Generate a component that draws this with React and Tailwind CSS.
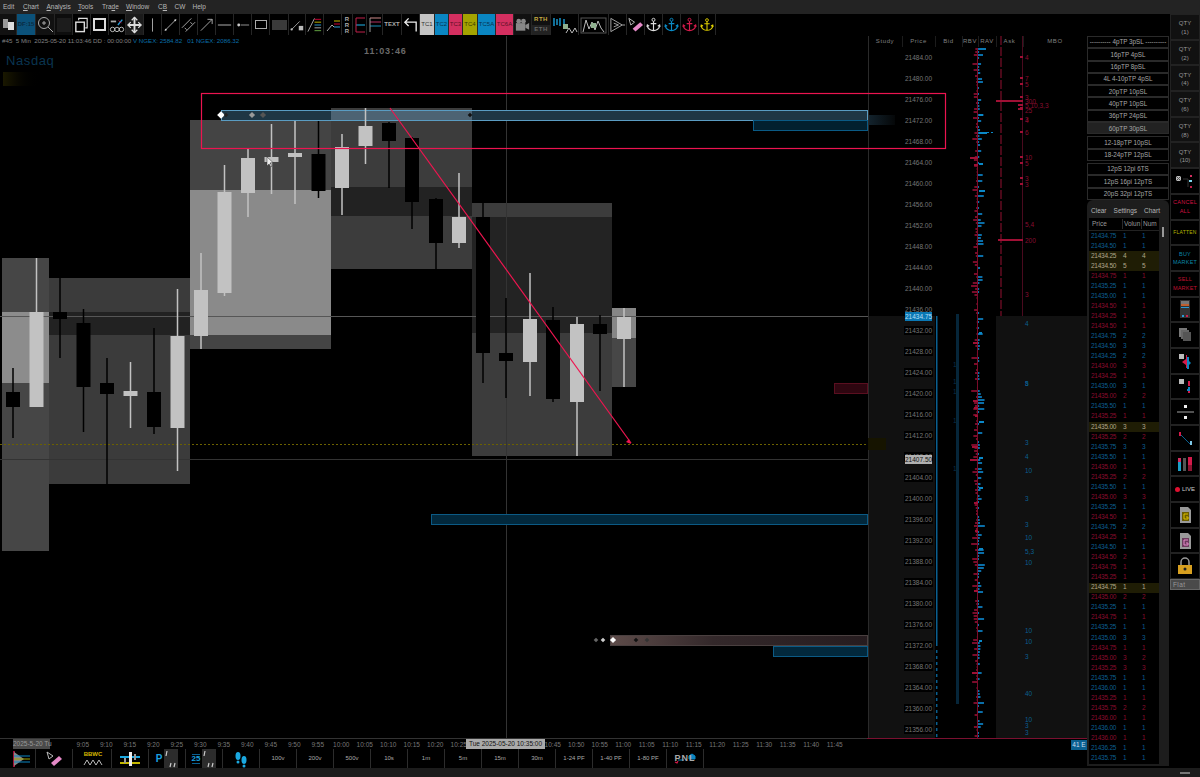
import React from "react";

const FONT = "font-['Liberation_Sans',Arial,sans-serif]";

const candles = [
  [13, 368, 438, 392, 407, 0], [36.5, 258, 407, 312, 407, 1], [60, 278, 358, 312, 319, 0],
  [83.5, 309, 432, 323, 387, 0], [107, 358, 484, 383, 394, 0], [130.5, 362, 428, 391, 396, 1],
  [154, 328, 434, 392, 427, 0], [177.5, 289, 471, 336, 428, 1], [201, 253, 349, 290, 336, 1],
  [224.5, 165, 296, 192, 293, 1], [248, 149, 217, 158, 193, 1], [271.5, 124, 194, 157, 162, 1],
  [295, 121, 204, 153, 157, 1], [318.5, 121, 198, 154, 191, 0], [342, 134, 215, 147, 188, 1],
  [365.5, 108, 164, 126, 146, 1], [389, 122, 188, 123, 141, 0], [412, 137, 229, 138, 202, 0],
  [436, 198, 269, 199, 243, 0], [459, 173, 248, 217, 243, 1], [483, 203, 383, 217, 353, 0],
  [506, 298, 398, 353, 361, 0], [530, 273, 396, 319, 362, 1], [553, 307, 402, 320, 399, 0],
  [577, 317, 456, 324, 402, 1], [600, 315, 391, 324, 334, 0], [624, 308, 387, 317, 339, 1],
];

// [x, w, top, bottom, color, inner top, inner bottom, inner color]
const boxes = [
  [2, 47, 258, 551, "#464646", 312, 383, "#8c8c8c"],
  [49, 141, 278, 484, "#3b3b3b", 312, 335, "#222222"],
  [190, 141, 120, 349, "#444444", 190, 335, "#8a8a8a"],
  [331, 141, 108, 269, "#3c3c3c", 187, 216, "#222222"],
  [472, 140, 203, 456, "#3c3c3c", 217, 333, "#232323"],
  [612, 24, 308, 387, "#474747", 308, 338, "#868686"],
];

const prices = ["21484.00","21480.00","21476.00","21472.00","21468.00","21464.00","21460.00","21456.00","21452.00","21448.00","21444.00","21440.00","21436.00","21432.00","21428.00","21424.00","21420.00","21416.00","21412.00","21408.00","21404.00","21400.00","21396.00","21392.00","21388.00","21384.00","21380.00","21376.00","21372.00","21368.00","21364.00","21360.00","21356.00"];

const mboRed = [["4",57],["7",78],["5",84],["3",97],["300",101],["5,10,3,3",105],["25",110],["3",119],["4",120],["6",132],["10",157],["5",163],["3",178],["3",184],["5,4",224],["200",240],["3",294]];
const mboBlue = [["4",323],["8",383],["5",383],["3",442],["4",456],["10",470],["3",498],["3",524],["10",537],["5,3",551],["10",562],["10",630],["10",641],["3",656],["40",693],["10",719],["3",725],["3",732]];

// pseudo random bars for the volume columns, same result every render
let seed = 7;
const rnd = () => {
  seed = (seed * 16807) % 2147483647;
  return (seed % 1000) / 1000;
};
const bars = [];
for (let y = 48; y < 738; y += 3) {
  bars.push({ y, red: Math.pow(rnd(), 3) * 6 + 1, blue: rnd() > 0.45 ? Math.pow(rnd(), 3) * 6 + 1 : 0 });
}
const bigRed = [[157, 8], [164, 4], [342, 5], [446, 6], [459, 8], [400, 5], [407, 4], [415, 3], [502, 4], [530, 3], [590, 4], [672, 6]];
const bigBlue = [[132, 8], [114, 4], [190, 6], [163, 4], [421, 5], [457, 4], [332, 3], [487, 4], [548, 4], [640, 3]];

const orders = [
  ["21434.75",1,1,"b"],["21434.50",1,1,"b"],["21434.25",4,4,"y"],["21434.50",5,5,"y"],["21434.75",1,1,"r"],["21435.25",1,1,"b"],["21435.00",1,1,"b"],["21434.50",1,1,"r"],["21434.25",1,1,"r"],["21434.50",1,1,"r"],
  ["21434.75",2,2,"b"],["21434.50",3,3,"b"],["21434.25",2,2,"b"],["21434.00",3,3,"r"],["21434.25",1,1,"r"],["21435.00",3,1,"b"],["21435.00",2,2,"r"],["21435.50",1,1,"b"],["21435.25",1,1,"r"],["21435.00",3,3,"y"],
  ["21435.25",2,2,"r"],["21435.75",3,3,"b"],["21435.50",1,1,"b"],["21435.00",1,1,"r"],["21435.25",2,2,"r"],["21435.50",1,1,"b"],["21435.00",3,3,"r"],["21435.25",1,1,"b"],["21434.50",1,1,"r"],["21434.75",2,2,"b"],
  ["21434.25",1,1,"r"],["21434.50",1,1,"b"],["21434.50",2,1,"r"],["21434.75",1,1,"r"],["21435.25",1,1,"r"],["21434.75",1,1,"y"],["21435.00",2,2,"r"],["21435.25",1,1,"b"],["21434.75",1,1,"r"],["21435.25",1,1,"b"],
  ["21435.00",3,3,"b"],["21434.75",1,1,"r"],["21435.00",3,2,"r"],["21435.25",3,3,"r"],["21435.75",1,1,"b"],["21436.00",1,1,"b"],["21435.25",1,1,"r"],["21435.75",2,2,"r"],["21436.00",1,1,"r"],["21436.00",1,1,"b"],
  ["21436.00",1,1,"r"],["21436.25",1,1,"b"],["21435.75",1,1,"b"],
];

const times = [];
for (let m = 9 * 60 + 5; m <= 11 * 60 + 45; m += 5) {
  times.push(`${Math.floor(m / 60)}:${String(m % 60).padStart(2, "0")}`);
}
// these three sit under the crosshair date tag
const hiddenTimes = ["10:30", "10:35", "10:40"];

const Ico = ({ w = 18, h = 20, children }) => (
  <svg width={w} height={h} viewBox={`0 0 ${w} ${h}`} fill="none">{children}</svg>
);

const Anchor = ({ color }) => (
  <Ico>
    <circle cx="9" cy="4.5" r="1.6" stroke={color} />
    <path d="M9 6v10M6 8.5h6M2.5 10.5c0 3.5 3.5 5.5 6.5 5.5s6.5-2 6.5-5.5M2 12l.5-2 2 1.2M16 12l-.5-2-2 1.2" stroke={color} strokeWidth="1.2" />
  </Ico>
);

const Eraser = () => (
  <Ico>
    <path d="M2 3l6 4-4 3z" stroke="#bbb" />
    <path d="M6 14l8-7 3 3-8 7z" fill="#e58ac8" />
  </Ico>
);

const Cell = ({ w = 18, className = "", children }) => (
  <div style={{ width: w }} className={`h-full shrink-0 flex items-center justify-center border-r border-[#262626] text-[#aaa] text-[6px] whitespace-nowrap overflow-hidden ${className}`}>
    {children}
  </div>
);

const Toolbar = () => (
  <div className="h-[21px] flex items-stretch bg-black">
    <Cell w={17} className="bg-[#111]"><Ico w={14}><rect x="2" y="4" width="5" height="9" fill="#999" /><rect x="7" y="7" width="6" height="8" fill="#ddd" /></Ico></Cell>
    <Cell w={19} className="bg-[#0b5179] !text-[#0a2c44] font-bold">DF:15</Cell>
    <Cell w={19} className="bg-[#111]"><Ico><circle cx="8" cy="8" r="5.5" stroke="#aaa" /><path d="M12 12l5 5M6 8h4M8 6v4" stroke="#aaa" /></Ico></Cell>
    <Cell w={18} className="bg-[#0d0d0d]"><div className="w-[14px] h-[14px] bg-[#1c1c1c]" /></Cell>
    <Cell className="bg-black"><Ico><rect x="3" y="7" width="9" height="10" stroke="#ddd" strokeWidth="1.5" /><path d="M6 5V3h9v10h-2" stroke="#ddd" strokeWidth="1.2" /></Ico></Cell>
    <Cell className="bg-black"><div className="w-[13px] h-[13px] border-2 border-[#ddd]" /></Cell>
    <Cell w={17}><Ico><circle cx="4" cy="15" r="2.5" stroke="#ccc" /><circle cx="9" cy="15" r="2.5" stroke="#ccc" /><circle cx="14" cy="15" r="2.5" stroke="#ccc" /><path d="M2 6h6" stroke="#aaa" strokeWidth="2" /><path d="M10 10l5-6" stroke="#2a9bd6" strokeWidth="1.5" /><path d="M11 5l3 3" stroke="#d02050" /></Ico></Cell>
    <Cell w={18} className="bg-[#1a1a1a]"><Ico><path d="M9 2v16M2 10h14" stroke="#ddd" strokeWidth="2" /><path d="M6 5l3-3 3 3M6 15l3 3 3-3M5 7l-3 3 3 3M13 7l3 3-3 3" stroke="#ddd" strokeWidth="1.3" /></Ico></Cell>
    <Cell><Ico><path d="M9 3v14" stroke="#aaa" /></Ico></Cell>
    <Cell><Ico><path d="M3 16L15 4" stroke="#aaa" /><circle cx="4" cy="15" r="1" fill="#ccc" /><circle cx="14" cy="5" r="1" fill="#ccc" /></Ico></Cell>
    <Cell><Ico><path d="M2 13L12 3M6 17L16 7M5 13l2 2M11 7l2 2" stroke="#aaa" /></Ico></Cell>
    <Cell><Ico><path d="M3 16L15 4M10 4h5v5" stroke="#aaa" /></Ico></Cell>
    <Cell><Ico><path d="M2 10h14" stroke="#999" strokeWidth="1.2" /></Ico></Cell>
    <Cell><Ico><path d="M7 10h9" stroke="#999" /><circle cx="5" cy="10" r="1.5" fill="#ccc" /></Ico></Cell>
    <Cell w={18}><div className="w-[12px] h-[9px] border border-[#aaa]" /></Cell>
    <Cell w={19}><div className="w-[15px] h-[10px] bg-[#3a3a3a]" /></Cell>
    <Cell w={17}><Ico><path d="M3 15L12 6" stroke="#aaa" /><circle cx="3" cy="15" r="1.3" fill="#bbb" /><rect x="11" y="11" width="5" height="5" fill="#bbb" /></Ico></Cell>
    <Cell w={18}><Ico><path d="M2 17L9 3" stroke="#aaa" /><path d="M9 4h7" stroke="#c03" /><path d="M9 7h7" stroke="#c5b800" /><path d="M9 10h7" stroke="#2a9bd6" /><path d="M9 13h7" stroke="#aaa" /><path d="M9 16h7" stroke="#6a4" /></Ico></Cell>
    <Cell w={18}><Ico w={16}><path d="M2 16l5-6 2 2" stroke="#aaa" /><path d="M9 6h6" stroke="#c5b800" /><path d="M9 9h6" stroke="#c03" /><path d="M9 12h6" stroke="#2a9bd6" /></Ico></Cell>
    <Cell w={11} className="leading-[6px] font-bold flex-col"><span>R</span><span>R</span><span>R</span></Cell>
    <Cell w={14}><Ico w={12}><path d="M2 3h9" stroke="#c0204a" /><path d="M2 10h9" stroke="#1a8fb8" strokeWidth="1.3" /><path d="M2 17h9M2 3v14" stroke="#c0204a" /></Ico></Cell>
    <Cell w={16}><Ico w={14}><path d="M2 3h11" stroke="#c88" /><path d="M2 7h11" stroke="#b03060" /><path d="M2 11h11" stroke="#1a8fb8" /><path d="M2 3v14" stroke="#999" /></Ico></Cell>
    <Cell w={19} className="font-bold">TEXT</Cell>
    <Cell w={18}><Ico><path d="M15 17V7H3M7 3L3 7l4 4" stroke="#eee" strokeWidth="1.4" /></Ico></Cell>
    <Cell w={15} className="bg-[#c4c4c4] !text-[#333]">TC1</Cell>
    <Cell w={14} className="bg-[#0a86c2] !text-[#08344f]">TC2</Cell>
    <Cell w={14} className="bg-[#d42f60] !text-[#5a0f25]">TC3</Cell>
    <Cell w={15} className="bg-[#a3a300] !text-[#3c3c00]">TC4</Cell>
    <Cell w={18} className="bg-[#0a86c2] !text-[#08344f]">TC5A</Cell>
    <Cell w={18} className="bg-[#d42f60] !text-[#5a0f25]">TC6A</Cell>
    <Cell w={18} className="bg-[#111]"><Ico><rect x="2" y="8" width="10" height="8" fill="#888" /><circle cx="5" cy="6" r="2.5" fill="#888" /><circle cx="10" cy="6" r="2.5" fill="#888" /><path d="M12 10l4-2v7l-4-2z" fill="#888" /></Ico></Cell>
    <Cell w={19} className="flex-col bg-[#111]">
      <span className="w-full h-[10px] flex items-center justify-center text-[#c5ab40] tracking-[0.5px] font-bold">RTH</span>
      <span className="w-full h-[10px] flex items-center justify-center bg-[#222] text-[#666] tracking-[0.5px] font-bold">ETH</span>
    </Cell>
    <Cell w={28}><Ico w={27}><path d="M3 3v8M6 4v6M9 3v8M13 4v6" stroke="#1a9fd8" strokeWidth="1.4" /><rect x="12" y="9" width="5" height="5" fill="#8fb08f" /><path d="M15 18l3-5 3 5 3-5 2 4" stroke="#bbb" /></Ico></Cell>
    <Cell w={30}><Ico w={27}><rect x="1" y="3" width="25" height="15" stroke="#555" /><path d="M3 17l3-12 3 9 3-7 3 8 3-9 3 7 3 4" stroke="#bbb" /><rect x="11" y="8" width="5" height="5" fill="#8fb08f" /></Ico></Cell>
    <Cell w={18}><Ico><path d="M2 3l12 7-12 7zM5 8l5 2-5 2M14 10h3" stroke="#aaa" /></Ico></Cell>
    <Cell w={18}><Eraser /></Cell>
    <Cell w={18}><Anchor color="#ddd" /></Cell>
    <Cell w={18}><Anchor color="#0a8cc8" /></Cell>
    <Cell w={18}><Anchor color="#d41a4a" /></Cell>
    <Cell w={17}><Anchor color="#e0d000" /></Cell>
    <div className="flex-1 bg-black" />
  </div>
);

const ChartDrawing = () => (
  <svg className="absolute left-0 top-0" width="1087" height="703" viewBox="0 35 1087 703">
    <defs>
      <linearGradient id="stub"><stop offset="0" stopColor="#13232d" /><stop offset="1" stopColor="#050708" /></linearGradient>
      <linearGradient id="pink"><stop offset="0" stopColor="#5e4c4a" /><stop offset="0.4" stopColor="#33282a" /><stop offset="1" stopColor="#261c1f" /></linearGradient>
    </defs>
    {/* ladder shading */}
    <rect x="868" y="316" width="67" height="422" fill="#111" />
    <rect x="996" y="316" width="91" height="422" fill="#111" />
    {[868, 902, 935, 962, 978, 996, 1023].map((x) => (
      <line key={x} x1={x + 0.5} x2={x + 0.5} y1="36" y2={x === 868 ? 738 : 47} stroke={x === 868 ? "#2a2a2a" : "#1c1c1c"} />
    ))}
    {boxes.map((b, i) => (
      <g key={i}>
        <rect x={b[0]} y={b[2]} width={b[1]} height={b[3] - b[2]} fill={b[4]} />
        <rect x={b[0]} y={b[5]} width={b[1]} height={b[6] - b[5]} fill={b[7]} />
      </g>
    ))}
    {/* levels */}
    <line x1="0" x2="868" y1="316.5" y2="316.5" stroke="#565656" />
    <line x1="0" x2="868" y1="459.5" y2="459.5" stroke="#333" />
    <line x1="0" x2="868" y1="444.5" y2="444.5" stroke="#6b6100" strokeDasharray="2 2" />
    <rect x="868" y="438" width="18" height="12" fill="#161400" />
    <line x1="506.5" x2="506.5" y1="36" y2="738" stroke="#333" />
    {/* zones */}
    <rect x="221.5" y="110.5" width="646" height="10" fill="#1f3644" stroke="#5a9cc2" />
    <rect x="331" y="111" width="141" height="9" fill="#4d6373" />
    <rect x="753.5" y="120.5" width="114" height="10" fill="#02202f" stroke="#0a5a85" />
    <rect x="869" y="115" width="26" height="10" fill="url(#stub)" />
    <rect x="431.5" y="514.5" width="436" height="10" fill="#02283c" stroke="#0b5a85" />
    <rect x="610.5" y="635.5" width="257" height="10" fill="url(#pink)" stroke="#4a4040" />
    <rect x="773.5" y="646.500" width="94" height="10" fill="#02283c" stroke="#0b5a85" />
    <rect x="834.5" y="383.5" width="33" height="10" fill="#2e0610" stroke="#5a0f20" />
    {candles.map((c) => {
      const col = c[5] ? "#c2c2c2" : "#000";
      return (
        <g key={c[0]}>
          <rect x={c[0] - 0.75} y={c[1]} width="1.5" height={c[2] - c[1]} fill={col} />
          <rect x={c[0] - 7} y={c[3]} width="14" height={c[4] - c[3]} fill={col} />
        </g>
      );
    })}
    {/* handles on the zones */}
    {[[221, 5, "#fff"], [226, 3, "#222"], [252, 4, "#999"], [263, 4, "#555"], [470, 3, "#111"], [596, 3, "#666"], [603, 3, "#ccc"], [613, 4, "#fff"], [636, 3, "#111"], [647, 3, "#333"]].map(([x, r, f]) => {
      const y = x > 500 ? 640 : 115;
      return <path key={x} d={`M${x - r / 1.3} ${y}L${x} ${y - r / 1.3}L${x + r / 1.3} ${y}L${x} ${y + r / 1.3}Z`} fill={f} />;
    })}
    {/* red box and arrow */}
    <rect x="201.5" y="93.5" width="744" height="55" stroke="#ec1450" strokeWidth="1.2" fill="none" />
    <path d="M390 108L631 443" stroke="#ee1550" strokeWidth="1.2" />
    <path d="M631 444l-5-2 3-3z" fill="#ee1550" />
    <path d="M267 157v9l2-2 2 3 1-1-2-3 3-.5z" fill="#eee" stroke="#333" strokeWidth="0.5" />
    {/* order flow columns */}
    <line x1="1001" x2="1001" y1="36" y2="316" stroke="#4a0818" strokeWidth="2" strokeDasharray="9 2" />
    <rect x="1022" y="36" width="1" height="280" fill="#4a0a1e" />
    {[57, 78, 84, 97, 108, 119, 132, 157, 163, 178, 184].map((y) => (
      <rect key={y} x="1020" y={y - 1} width="3" height="2" fill="#a01035" />
    ))}
    <rect x="996" y="100" width="27" height="2" fill="#a01035" />
    <rect x="1018" y="104" width="5" height="2" fill="#a01035" />
    <rect x="1018" y="108" width="5" height="2" fill="#a01035" />
    <rect x="998" y="239" width="25" height="2" fill="#a01035" />
    <rect x="936" y="316" width="1.5" height="330" fill="#0a5f90" />
    <line x1="936.7" x2="936.7" y1="650" y2="738" stroke="#0a5f90" strokeWidth="1.5" strokeDasharray="3 3" />
    <rect x="956" y="314" width="3" height="390" fill="#06263a" />
    <rect x="977" y="48" width="1" height="690" fill="#7a0c2a" />
    <rect x="978" y="48" width="8" height="2" fill="#0a78b4" />
    {bars.map((b) => (
      <g key={b.y}>
        <rect x={978 - b.red} y={b.y} width={b.red} height="2" fill="#7a0c2a" />
        <rect x="978" y={b.y} width={b.blue} height="2" fill="#0a6ea8" />
      </g>
    ))}
    {bigRed.map(([y, w]) => <rect key={y} x={978 - w} y={y} width={w} height="2" fill="#a01035" />)}
    {bigBlue.map(([y, w]) => <rect key={y} x="979" y={y} width={w} height="2" fill="#0a88c8" />)}
    <path d="M987 132.500h7" stroke="#0a88c8" strokeDasharray="2 2" />
    <g fontFamily="Liberation Sans, Arial, sans-serif" fontSize="6.5">
      {mboRed.map(([t, y], i) => <text key={i} x="1025" y={y + 3} fill="#8a0d30">{t}</text>)}
      {mboBlue.map(([t, y], i) => <text key={i} x="1025" y={y + 3} fill="#0a5f90">{t}</text>)}
      {[367, 384, 394, 423, 471].map((y) => <text key={y} x="953" y={y} fill="#07314a">1</text>)}
    </g>
  </svg>
);

const Ladder = () => (
  <div className="relative w-[219px] h-[703px] shrink-0">
    <div className="h-[12px] flex items-center text-[6px] tracking-[0.6px] text-[#808080] text-center">
      <span className="w-[34px]">Study</span>
      <span className="w-[33px]">Price</span>
      <span className="w-[27px]">Bid</span>
      <span className="w-[16px]">RBV</span>
      <span className="w-[18px]">RAV</span>
      <span className="w-[27px]">Ask</span>
      <span className="w-[64px]">MBO</span>
    </div>
    <div className="flex flex-col w-[67px] items-end">
      {prices.map((p) => (
        <div key={p} className="h-[21px] w-[33px] flex items-center justify-center text-[6.5px] text-[#777] shrink-0">
          <span className="bg-black leading-[9px] px-px">{p}</span>
        </div>
      ))}
    </div>
    <div className="absolute left-[37px] top-[277px] w-[27px] h-[9px] bg-[#0a78b4] text-[#b8dff5] text-[6.5px] leading-[9px] text-center">21434.75</div>
    <div className="absolute left-[37px] top-[420px] w-[27px] h-[9px] bg-[#b0b0b0] text-[#111] text-[6.5px] leading-[9px] text-center">21407.50</div>
  </div>
);

const btnRows = [
  ["---------- 4pTP 3pSL ----------", "16pTP 4pSL", "16pTP 8pSL", "4L 4-10pTP 4pSL", "20pTP 10pSL", "40pTP 10pSL", "36pTP 24pSL", "60pTP 30pSL"],
  ["12-18pTP 10pSL", "18-24pTP 12pSL"],
  ["12pS 12pi 6TS", "12pS 16pi 12pTS", "20pS 32pi 12pTS"],
];

const SideColumn = () => (
  <div className="w-[83px] shrink-0 flex flex-col pt-px">
    <div className="flex flex-col gap-[2px] pr-px">
      {btnRows.map((g, i) => (
        <div key={i} className="flex flex-col">
          {g.map((t) => (
            <div key={t} className={`h-[12.3px] border border-[#2a2a2a] flex items-center justify-center text-[6.3px] whitespace-nowrap text-[#a8a8a8] ${t === "60pTP 30pSL" ? "bg-[#222]" : "bg-black"}`}>{t}</div>
          ))}
        </div>
      ))}
    </div>
    <div className="h-[566px] rounded-t-md bg-[#1d1d1d] px-[2px] mr-px flex flex-col">
      <div className="h-[18px] shrink-0 flex items-center gap-[7px] pl-[2px] pt-1 text-[6.5px] text-[#b5b5b5]">
        <span>Clear</span><span>Settings</span><span>Chart</span>
      </div>
      <div className="flex-1 flex min-h-0">
        <div className="w-[70px] bg-black flex flex-col">
          <div className="h-[13px] flex items-center text-[6.5px] text-[#999] border-b border-[#222] shrink-0">
            <span className="w-[33px] pl-[3px]">Price</span>
            <span className="w-[19px] overflow-hidden border-l border-[#2a2a2a] pl-px">Volun</span>
            <span className="w-[18px] border-l border-[#2a2a2a] pl-px">Num</span>
          </div>
          {orders.map((o, i) => (
            <div key={i} className={`h-[10.05px] shrink-0 flex items-center text-[6.5px] leading-none ${o[3] === "b" ? "text-[#0c5f90]" : o[3] === "r" ? "text-[#8a0c2e]" : "text-[#b0a68a] bg-[#1f1d05]"}`}>
              <span className="w-[34px] pl-[2px] tracking-[-0.25px]">{o[0]}</span>
              <span className="w-[19px]">{o[1]}</span>
              <span>{o[2]}</span>
            </div>
          ))}
        </div>
        <div className="flex-1 pl-[3px] pt-[9px]"><div className="w-[2px] h-[10px] bg-[#999]" /></div>
      </div>
      <div className="h-[2px]" />
    </div>
  </div>
);

const Q = ({ children, className = "" }) => (
  <div className={`h-[25.7px] shrink-0 border border-[#222] flex flex-col items-center justify-center text-center text-[6px] leading-[8.5px] ${className}`}>{children}</div>
);

const QtyColumn = () => (
  <div className="w-[30px] h-[754px] shrink-0 flex flex-col bg-black text-[#999]">
    {["(1)", "(2)", "(4)", "(6)", "(8)", "(10)"].map((t) => <Q key={t} className="bg-[#111] pt-[2px]"><span>QTY</span><span>{t}</span></Q>)}
    <Q><Ico w={26}><rect x="4" y="5" width="5" height="5" fill="#bbb" /><path d="M4 5l5 5M9 5l-5 5" stroke="#555" /><rect x="18" y="4" width="2" height="2" fill="#d42f60" /><rect x="17" y="9" width="3" height="2" fill="#7fd8f0" /><rect x="18" y="15" width="2" height="2" fill="#c0204a" /><path d="M11 8h5v8" stroke="#333" /></Ico></Q>
    <Q className="!text-[#d01040] !text-[5.5px] tracking-[0.3px]"><span>CANCEL</span><span>ALL</span></Q>
    <Q className="!text-[#b5b500] !text-[5px] tracking-[0.2px]">FLATTEN</Q>
    <Q className="!text-[#0a86a8] !text-[5.5px] tracking-[0.2px]"><span>BUY</span><span>MARKET</span></Q>
    <Q className="!text-[#c01030] !text-[5.5px] tracking-[0.2px]"><span>SELL</span><span>MARKET</span></Q>
    <Q><Ico w={14}><rect x="2" y="1" width="10" height="18" fill="#333" /><rect x="3" y="2" width="8" height="3" fill="#777" /><rect x="3" y="5" width="8" height="2" fill="#c06030" /><rect x="3" y="8" width="8" height="1" fill="#2a9bd6" /><rect x="4" y="16" width="2" height="2" fill="#2a9bd6" /><rect x="8" y="16" width="2" height="2" fill="#d02050" /></Ico></Q>
    <Q><Ico w={16}><rect x="2" y="3" width="8" height="9" fill="#777" /><rect x="4" y="5" width="8" height="9" fill="#666" /><rect x="6" y="7" width="8" height="9" fill="#555" /></Ico></Q>
    <Q><Ico w={20}><rect x="4" y="3" width="5" height="5" fill="#bbb" /><path d="M11 4v4l-4 3 4 3v3h1V4z" fill="#d41a4a" /><path d="M12 6h2v4l2 2-2 2v4h-2z" fill="#0a86c2" /></Ico></Q>
    <Q><Ico w={20}><rect x="4" y="3" width="5" height="5" fill="#bbb" /><rect x="13" y="5" width="2" height="5" fill="#d41a4a" /><rect x="13" y="11" width="2" height="2" fill="#0a86c2" /><rect x="12" y="13" width="3" height="2" fill="#0a86c2" /><rect x="13" y="15" width="2" height="2" fill="#d41a4a" /></Ico></Q>
    <Q><Ico w={20}><rect x="9" y="3" width="3" height="3" fill="#eee" /><rect x="9" y="14" width="3" height="3" fill="#eee" /><path d="M2 10h17" stroke="#888" strokeWidth="1.2" /></Ico></Q>
    <Q><Ico w={20}><path d="M5 6l10 10" stroke="#0a5f90" /><rect x="4" y="4" width="2" height="4" fill="#d41a4a" /><rect x="15" y="13" width="2" height="4" fill="#7fc8e8" /></Ico></Q>
    <Q><Ico w={20}><rect x="3" y="8" width="3" height="9" fill="#1aa0c8" /><rect x="3" y="4" width="3" height="4" fill="#d42f60" /><rect x="8" y="4" width="3" height="13" fill="#555" /><rect x="13" y="3" width="4" height="8" fill="#d41a4a" /><rect x="13" y="11" width="4" height="6" fill="#8a1530" /></Ico></Q>
    <Q className="!flex-row gap-[2px] !text-[#ccc]"><span className="w-[5px] h-[5px] rounded-full bg-[#e01030]" /><span>LIVE</span></Q>
    <Q><Ico w={16}><path d="M3 2h8l3 3v13H3z" fill="#999" /><rect x="5" y="7" width="7" height="9" fill="#6b5c00" /><path d="M11 9H7v5h4v-2H9" stroke="#e0c000" /></Ico></Q>
    <Q><Ico w={16}><path d="M3 2h8l3 3v13H3z" fill="#999" /><rect x="5" y="7" width="7" height="9" fill="#6b3a5c" /><path d="M11 9H7v5h4v-2H9" stroke="#e58ac8" /></Ico></Q>
    <Q><Ico w={18}><path d="M5 9V6a4 4 0 018 0v3" stroke="#999" strokeWidth="1.5" /><rect x="2" y="9" width="14" height="9" fill="#d8a020" /><circle cx="9" cy="13" r="1.5" fill="#222" /></Ico></Q>
    <div className="h-[11px] bg-[#4a4a4a] border border-[#666] text-[#999] text-[6.5px] leading-[9px] pl-[2px] tracking-[0.4px]">Flat</div>
  </div>
);

const bottomCell = "h-full w-[37px] shrink-0 flex items-center justify-center border-r border-[#2c2c2c] text-[#aaa] text-[6px] whitespace-nowrap";

const BottomBar = () => (
  <div className="h-[19px] flex bg-black">
    <div className={`${bottomCell} !w-[36px]`}><Ico w={24}><path d="M8 2v16" stroke="#d41a4a" strokeWidth="1.5" /><path d="M8 3l10 7-10 7z" fill="#888" /><path d="M8 7h16" stroke="#0a86c2" /><path d="M8 10h16" stroke="#a3a300" /><path d="M8 13h16" stroke="#0a86c2" /></Ico></div>
    <div className={`${bottomCell} mr-[2px]`}><Eraser /></div>
    <div className={`${bottomCell} flex-col !text-[#d8b800] font-bold leading-[7px]`}>
      <span>BBWC</span>
      <svg width="20" height="8" viewBox="0 0 20 8" fill="none"><path d="M1 7l3-5 3 5 3-5 3 5 3-5 3 5" stroke="#bbb" /></svg>
    </div>
    <div className={bottomCell}><Ico w={24}><path d="M2 8h20" stroke="#1aa8e0" strokeWidth="2" /><path d="M2 14h20" stroke="#c5b800" strokeWidth="2" /><rect x="11" y="3" width="3" height="14" fill="#eee" /><rect x="6" y="9" width="2" height="5" fill="#999" /><rect x="16" y="5" width="2" height="6" fill="#999" /></Ico></div>
    <div className={`${bottomCell} gap-[2px]`}><span className="text-[#1aa0e0] font-bold text-[10px] leading-none">P</span><Ico w={14}><rect width="14" height="20" fill="#2c2c2c" /><path d="M2 7l1-5M6 18l1-4M10 18l1-4" stroke="#ccc" strokeWidth="1.2" /></Ico></div>
    <div className={`${bottomCell} gap-[2px]`}><span className="text-[#1aa0e0] font-bold text-[8px] leading-none border-y border-[#0a5f90]">25</span><Ico w={14}><rect width="14" height="20" fill="#2c2c2c" /><path d="M2 7l1-5M6 18l1-4M10 18l1-4" stroke="#ccc" strokeWidth="1.2" /></Ico></div>
    <div className={bottomCell}><Ico w={16}><ellipse cx="5" cy="7" rx="2.500" ry="4" fill="#1aa8e0" /><ellipse cx="11" cy="11" rx="2.500" ry="4" fill="#1aa8e0" /><circle cx="5" cy="13" r="1.500" fill="#1aa8e0" /><circle cx="11" cy="17" r="1.500" fill="#1aa8e0" /></Ico></div>
    {["100v", "200v", "500v", "10s", "1m", "5m", "15m", "30m", "1-24 PF", "1-40 PF", "1-80 PF"].map((t) => (
      <div key={t} className={bottomCell}>{t}</div>
    ))}
    <div className={`${bottomCell} relative tracking-[1px] !text-[9px] font-bold`}>
      <svg className="absolute left-[6px] top-[4px]" width="26" height="11" viewBox="0 0 26 11" fill="none"><path d="M2 9l2 1 1-2" stroke="#d41a4a" strokeWidth="1.2" /><path d="M5 7h6M16 3l3-2 3 2v3h-6z" fill="#0a86c2" stroke="#0a86c2" /></svg>
      <span className="relative">PNL</span>
    </div>
  </div>
);

const TimeAxis = () => (
  <div className="relative h-[11px] border-t border-[#333] pl-[71px] flex text-[6.5px] text-[#777] bg-black">
    {times.map((t) => <span key={t} className="w-[23.5px] shrink-0 text-center leading-[11px]">{hiddenTimes.includes(t) ? "" : t}</span>)}
    <span className="absolute left-[13px] top-0 h-[10px] w-[37px] bg-[#4a4a4a] text-[#999] text-center leading-[10px] whitespace-nowrap">2025-5-20 Tu</span>
    <span className="absolute left-[466px] top-0 h-[10px] w-[79px] bg-[#aaa] text-[#111] text-center leading-[10px] whitespace-nowrap">Tue 2025-05-20 10:35:00</span>
    <span className="absolute right-0 top-[1px] h-[10px] w-[16px] bg-[#0a5f90] text-[#cde] text-center leading-[10px] whitespace-nowrap">41 E</span>
    <span className="absolute right-0 -top-px w-[220px] h-px bg-[#7a1030]" />
  </div>
);

export default function App() {
  return (
    <div className={`w-[1200px] h-[777px] overflow-hidden flex flex-col bg-black ${FONT}`}>
      <div className="h-[14px] shrink-0 bg-[#232323] flex items-center text-[6.5px] text-[#b8b8b8] relative">
        <span className="w-[23px] pl-[3px]">Edit</span>
        <span className="w-[23.5px]"><u>C</u>hart</span>
        <span className="w-[31.5px]"><u>A</u>nalysis</span>
        <span className="w-[24px]"><u>T</u>ools</span>
        <span className="w-[24px]">Tra<u>d</u>e</span>
        <span className="w-[32px]"><u>W</u>indow</span>
        <span className="w-[16.5px]">C<u>B</u></span>
        <span className="w-[18px]">CW</span>
        <span>Help</span>
      </div>
      <div className="flex flex-1 min-h-0">
        <div className="w-[1170px] shrink-0 flex flex-col">
          <Toolbar />
          <div className="flex h-[733px]">
            <div className="w-[1087px] shrink-0 flex flex-col">
              <div className="relative h-[703px] flex">
                <ChartDrawing />
                <div className="relative w-[868px] shrink-0 h-full">
                  <div className="px-[2px] pt-[1px] text-[6.2px] text-[#808080] whitespace-pre leading-[9px]">
                    #45  5 Min  2025-05-20 11:03:46 DD : 00:00:00 <span className="text-[#0a6ea8]">V NGEX: 2584.82   01 NGEX: 2086.32</span>
                  </div>
                  <div className="pl-[364px] pt-[1px] text-[9px] font-bold text-[#6a6a6a] tracking-[0.9px] leading-[10px]">11:03:46</div>
                  <div className="pl-[6px] text-[13px] tracking-[0.6px] text-[#0a3550] leading-[16px] -mt-[3px]">Nasdaq</div>
                  <div className="ml-[3px] mt-[3px] w-[40px] h-[14px] bg-gradient-to-r from-[#1a1800] to-black" />
                </div>
                <Ladder />
              </div>
              <TimeAxis />
              <BottomBar />
            </div>
            <SideColumn />
          </div>
        </div>
        <QtyColumn />
      </div>
      <div className="h-[9px] shrink-0 bg-[#1c1c1c] flex items-center justify-end pr-[10px]">
        <div className="w-[10px] h-[2px] bg-[#777]" />
      </div>
    </div>
  );
}
